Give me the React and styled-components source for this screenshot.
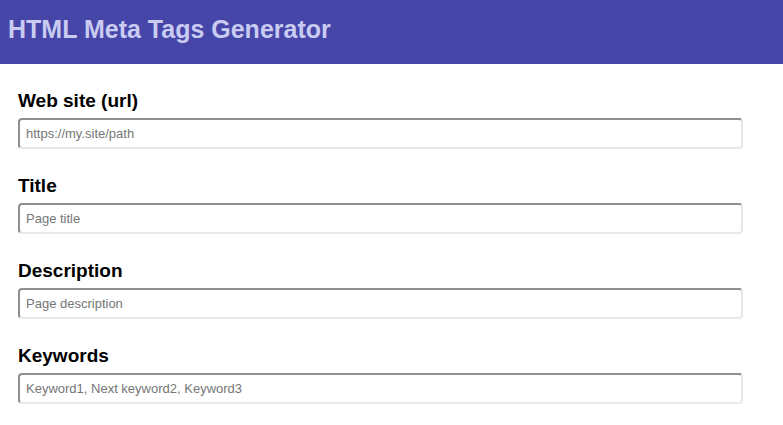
import React from 'react';
import styled, { createGlobalStyle } from 'styled-components';

const GlobalStyle = createGlobalStyle`
  html, body {
    margin: 0;
    padding: 0;
    background: #ffffff;
    font-family: "Liberation Sans", Arial, sans-serif;
  }
`;

const Header = styled.header`
  height: 64px;
  box-sizing: border-box;
  padding: 15px 8px 0;
  background-color: #4646a9;
`;

const HeaderTitle = styled.h1`
  margin: 0;
  font-size: 25px;
  line-height: 28px;
  font-weight: 700;
  color: #c9cbf1;
`;

const Form = styled.form`
  padding: 26px 40px 0 18px;
`;

const Field = styled.div`
  display: flex;
  flex-direction: column;
  margin-bottom: 26px;
`;

const Label = styled.label`
  font-size: 19px;
  line-height: 21px;
  font-weight: 700;
  color: #000000;
  margin-bottom: 7px;
`;

const Input = styled.input`
  box-sizing: border-box;
  width: 100%;
  height: 31px;
  padding: 0 6px;
  border-width: 2px;
  border-style: solid;
  border-color: #8f8f8f #e8e8e8 #e8e8e8 #8f8f8f;
  border-radius: 4px;
  font-family: "Liberation Sans", Arial, sans-serif;
  font-size: 13px;
  color: #222;
  background: #ffffff;
  outline: none;

  &::placeholder {
    color: #767676;
  }
`;

const fields = [
  { id: 'url', label: 'Web site (url)', placeholder: 'https://my.site/path' },
  { id: 'title', label: 'Title', placeholder: 'Page title' },
  { id: 'description', label: 'Description', placeholder: 'Page description' },
  { id: 'keywords', label: 'Keywords', placeholder: 'Keyword1, Next keyword2, Keyword3' },
];

const App = () => (
  <>
    <GlobalStyle />
    <Header>
      <HeaderTitle>HTML Meta Tags Generator</HeaderTitle>
    </Header>
    <Form onSubmit={(e) => e.preventDefault()}>
      {fields.map((field) => (
        <Field key={field.id}>
          <Label htmlFor={field.id}>{field.label}</Label>
          <Input id={field.id} type="text" placeholder={field.placeholder} />
        </Field>
      ))}
    </Form>
  </>
);

export default App;
